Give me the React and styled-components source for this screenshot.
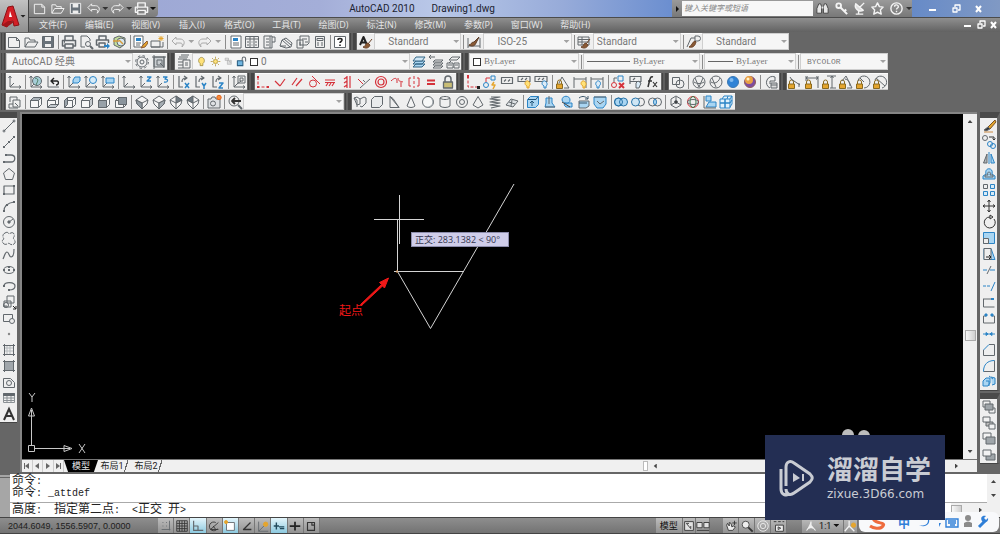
import React from 'react';
import styled, { createGlobalStyle } from 'styled-components';

const colors = {
  chrome: '#666666',
  bar: '#efefef',
  line: '#62686d',
  blue: '#2b84c6',
  paleBlue: '#a9d5f2',
  red: '#d5323b',
  gold: '#e5a52d',
};

const uiFont = 'Roboto, "Noto Sans CJK SC", sans-serif';
const serifFont = '"Liberation Serif", "Noto Sans CJK SC", serif';
const monoFont = '"Liberation Mono", "Noto Sans CJK SC", monospace';

const GlobalStyle = createGlobalStyle`
  * {
    box-sizing: border-box;
  }
  body {
    margin: 0;
    background: ${colors.chrome};
    font-family: ${uiFont};
    font-size: 10px;
  }
  button, select, input {
    margin: 0;
    padding: 0;
    border: 0;
    background: transparent;
    font: inherit;
    color: inherit;
  }
`;

const B = colors.blue;
const P = colors.paleBlue;
const R = colors.red;
const G = colors.gold;

const axes = <path d="M3 2v11h11M3 13l4-4M1.500 4L3 2l1.500 2M12 11.500l2 1.500-2 1.500" />;
const cube = <path d="M2.500 6.500l3-3h8v7l-3 3h-8zM2.500 6.500h8v7M10.500 6.500l3-3" fill="#f6f6f6" />;
const iso = <path d="M8 2l6 4-1 4-5 5-5-5-1-4zM2 6l6 3 6-3M8 9v6" fill="#f6f6f6" />;
const lock = (
  <g>
    <path d="M2.500 10V8a2 2 0 0 1 4 0v2" stroke="#8a6a20" />
    <rect x="1.500" y="10" width="6" height="4.500" fill={G} stroke="#8a6a20" />
  </g>
);
const bulb = <path d="M11 14v-2c-4-2-1-6 1-5s3 4 1 5v2z" fill="#ffe27a" stroke={G} />;
const brush = <path d="M14 5l-4 5M10 9c-3 0-2 4-5 4 3 2 6 1 7-2z" fill="#8a5a35" stroke="#6c4429" />;

const ICONS = {
  new: <path d="M2.500 3.500h8l3 3v7h-11zM10.500 3.500v3h3" />,
  open: <path d="M2 13V4h4l1 2h5v2M2 13l3-5h10l-3 5z" />,
  save: <g><path d="M2.500 2.500h11v11h-11z" fill="#69727a" /><path d="M5 3h6v4H5zM5 10h6v3H5z" fill="#eee" stroke="none" /></g>,
  print: <path d="M4 6V2h8v4M4 12H1.500V6.500h13V12H12M4 10h8v4H4zM3 8h1" strokeWidth="1.500" />,
  preview: <g><path d="M3 13V2h6l3 3v2M3 13h4" /><circle cx="10" cy="10" r="2.500" /><path d="M12 12l3 3" strokeWidth="2" /></g>,
  publish: <g><path d="M4 6V2h7v4M3 11H1.500V6h12v3M4 9h6v4H4z" strokeWidth="1.500" /><path d="M9 11h3V9l3 3-3 3v-2H9z" fill={B} stroke="none" /></g>,
  dwf: <g><path d="M3 4l5-2 6 2v6l-5 4-6-3z" fill="#c3dc9a" /><circle cx="10" cy="8" r="4" fill="#d7e8ee" /><path d="M8 6l4 4M2 7h6" stroke="#d79a3a" strokeWidth="1.500" /></g>,
  match: <g><path d="M2 2h9v11H2zM4 9h5M4 11h4" fill="#fff" /><path d="M4 4h5v3H4z" fill={B} stroke="none" /><path d="M15 7l-4 4-2 3 4-1 3-4z" fill={G} stroke="#8a5a35" /></g>,
  block: <g><path d="M2 13V7h9v6zM2 13h12V8" /><path d="M12 2v5M9.500 4.500h5M10 2.500l4 4M14 2.500l-4 4" stroke={G} /></g>,
  undo: <path d="M6 3L2 7l4 4V9h4c2 0 3 1 2 4 4-4 2-8-2-8H6z" />,
  redo: <path d="M10 3l4 4-4 4V9H6c-2 0-3 1-2 4-4-4-2-8 2-8h4z" />,
  props: <g><path d="M3 2h10v12H3zM5 9h6M5 11h6" fill="#fff" /><path d="M5 4h5v3H5z" fill={B} stroke="none" /></g>,
  dcenter: <path d="M1.500 2.500h13v11h-13zM6 3v10M10 3v10M2 5h12M3 8h2M7.500 8h1M11 8h2M3 11h2M7.500 11h1M11 11h2" />,
  palettes: <path d="M3 2h8v12H3zM11 3h3v5h-3M5 5h3M5 8h3M5 11h3M9 2v12" />,
  sheets: <path d="M2 12l2-6 4-2 6 5-1 4-5 1zM4 6l8 7M6 5l7 6M2 12h6" />,
  markup: <path d="M5 2h9v7l-2 2H5zM2 6h6v8H2zM7 5h5M4 9h2M4 11h2M10 8h3" />,
  calc: <path d="M3.500 2.500h9v11h-9zM5 4.500h6v2H5zM5 9h2M9 9h2M5 11h2M9 11h2" />,
  help: <g><rect x="2.500" y="2.500" width="11" height="11" fill="#fff" /><path d="M6 6c0-2 4-2 4 0 0 1.500-2 1.500-2 3M8 10.500v1.500" strokeWidth="1.600" stroke="#222" /></g>,
  textStyle: <g><path d="M2 11l3.500-8L9 11M3.500 8.500h4" stroke="#222" strokeWidth="2" />{brush}</g>,
  dimStyle: <g><path d="M2 4v10M14 4v10M2 12h12" /><path d="M13 3L8 8c-3 0-3 3-5 3 3 2 6 1 7-2z" fill="#8a5a35" stroke="#5c3d28" /></g>,
  tableStyle: <g><path d="M2 3h11v8H2zM2 5.500h11M6 3v8M2 8h11" />{brush}</g>,
  leader: <g><path d="M2 13l4-9h4M10 2h3a2 2 0 0 1 0 5h-3z" /><path d="M10 7c-3 1-3 5-6 6 4 1 6-1 7-5z" fill="#8a5a35" stroke="#6c4429" /></g>,
  gear: <g><circle cx="8" cy="8" r="5" /><circle cx="8" cy="8" r="2" /><circle cx="8" cy="8" r="6.400" strokeDasharray="2.500 2.500" /></g>,
  workspace: <g><path d="M3 3h10v10H3z" fill="#c9cdd0" /><path d="M1 3h14M3 1v14M13 2v12M6 6h5v5H6zM9 9l4 4" /></g>,
  layers: <g><path d="M5 1h8M3 3h9M2 5h9" /><path d="M2 8h5M2 11h5M2 14h5M7 6h7v8H7zM9 9h3M9 11h3" /></g>,
  layerMake: <g><path d="M2 13l3-3h9l-3 3zM2 10l3-3h9l-3 3z" fill={P} stroke="#356786" /><path d="M2 7l3-4h9l-3 4z" fill="#cfe6f5" stroke="#356786" /></g>,
  layerPrev: <path d="M5 14l2-2h8l-2 2zM5 11l2-2h8l-2 2zM5 8l2-2h8l-2 2zM7 3H1m2-2L1 3l2 2" />,
  layerState: <path d="M4 6l3-3h8l-3 3zM4 9l2-2M2 9h6v5H2zM9 9h5v5H9zM10 11h3M3 11h4" />,
  ucs: axes,
  ucsWorld: <g>{axes}<circle cx="9" cy="7" r="4.500" fill="#a5ccd6" /><path d="M7 4c5 1 2 4 1 7" stroke="#4a7d60" /></g>,
  ucsPrev: <g><path d="M3 2v11h11" /><path d="M7 7h5c2 0 2 4-1 4M9 4L6 7l3 3" stroke="#222" strokeWidth="1.400" /></g>,
  ucsFace: <g>{axes}<path d="M7 6l2-3h5v4l-2 2H7z" fill={P} stroke={B} /></g>,
  ucsObj: <g>{axes}<circle cx="10" cy="6" r="3.500" fill="#d6ebf8" stroke={B} /></g>,
  ucsView: <g>{axes}<path d="M6 4h8v5H6z" fill={P} stroke={B} /></g>,
  ucsZ: <g>{axes}<path d="M9 3h4l-4 4h4" stroke={B} strokeWidth="1.300" /></g>,
  ucs3: <g>{axes}<path d="M8 3h4L10 5c4 0 3 4-1 3" stroke={B} strokeWidth="1.300" /></g>,
  rotX: <g><path d="M3 2v11h4M6 8c0-3 1-4 4-4M8 2l3 2-3 2" strokeWidth="1.200" /><path d="M9 9l4 5M13 9l-4 5" stroke={B} strokeWidth="1.500" /></g>,
  rotY: <g><path d="M3 2v11h4M6 8c0-3 1-4 4-4M8 2l3 2-3 2" strokeWidth="1.200" /><path d="M9 9l2 3 2-3M11 12v3" stroke={B} strokeWidth="1.500" /></g>,
  rotZ: <g><path d="M3 2v11h4M6 8c0-3 1-4 4-4M8 2l3 2-3 2" strokeWidth="1.200" /><path d="M9 9h4l-4 5h4" stroke={B} strokeWidth="1.500" /></g>,
  ucsApply: <g>{axes}<path d="M7 2h7v7H7zM9 4h3v3H9zM6 10l4-3" /></g>,
  coincident: <g><path d="M3 3v10h10" stroke={R} strokeDasharray="3 1.500" /><path d="M2 2h2v2H2zM2 12h2v2H2zM12 12h2v2h-2z" fill={R} stroke="none" /></g>,
  perp: <path d="M3 7l5 5M8 12l5-7" stroke={R} strokeWidth="1.200" />,
  parallel: <path d="M3 11l5-7M7 12l6-7" stroke={R} strokeWidth="1.200" />,
  tangent: <g stroke={R}><circle cx="7" cy="9.500" r="3.500" /><path d="M6 2l8 8" /></g>,
  horiz: <path d="M3 6h10M3 8.500h10M4 12l2-3M7 12l2-3M10 12l2-3" stroke={R} strokeWidth="1.200" />,
  vert: <path d="M8 2v12M11 2v12M5 5l3-2M5 9l3-2M5 13l3-2" stroke={R} strokeWidth="1.200" />,
  collinear: <g><path d="M2 5l5 5" stroke={R} /><path d="M4 14l10-9M7 6l2 2" /></g>,
  concentric: <g stroke={R} strokeWidth="1.200"><circle cx="8" cy="8" r="5.500" /><circle cx="8" cy="8" r="3" /></g>,
  smooth: <path d="M2 7c4-4 6-3 6 0M9 4c0 4 3 3 5 4M8 7v2M12 8v5" stroke={R} />,
  symmetric: <path d="M5 4H3v8h2M11 4h2v8h-2M8 2v3M8 7v3M8 12v2" stroke={R} />,
  equal: <path d="M4 6.500h8M4 10h8" stroke={R} strokeWidth="1.800" />,
  fix: <g><path d="M5 8V5a3 3 0 0 1 6 0v3" strokeWidth="1.500" /><path d="M3.500 8h9v6h-9z" fill="#c9bd75" strokeWidth="1.300" /></g>,
  autoCon: <g><path d="M3 2v11h10" stroke={R} strokeDasharray="3 1.500" /><path d="M2 1h2v3H2z" fill={R} stroke="none" /><path d="M12 12h3v3h-3z" fill="#222" stroke="none" /></g>,
  autoAll: <g stroke={B}><path d="M9 2h4v4H9z" /><circle cx="4" cy="11" r="2.500" /><path d="M4 8V4h4" stroke={R} /><path d="M12 8l-2 3h3l-2 4" stroke={G} strokeWidth="1.500" /></g>,
  conShow: <path d="M2.500 3.500h11v6h-11zM5 7.500l2-2M9 7.500l2-2" strokeWidth="1.200" />,
  conShowAll: <g><path d="M2 2.500h12v5H2zM5 6l2-2M9 6l2-2" strokeWidth="1.200" />{bulb}</g>,
  conHideAll: <g><path d="M2 2.500h12v5H2zM5 6l2-2M9 6l2-2" strokeWidth="1.200" /><path d="M11 14v-2c-4-2-1-6 1-5s3 4 1 5v2z" fill="#dcecf8" stroke={B} /></g>,
  dimAuto: <g><path d="M4 9l3-6 7 11M9 14h5" />{lock}</g>,
  dimShow: <g><path d="M2 3v11M14 3v11M2 5h12" />{bulb}</g>,
  dimHide: <g><path d="M2 3v11M14 3v11M2 5h12" /><path d="M8 14v-2c-3-2 0-6 2-5s2 4 0 5v2z" fill="#dcecf8" stroke={B} /></g>,
  conDel: <g><path d="M8 2h5v5H8z" stroke={B} /><circle cx="4" cy="11" r="2.500" stroke={R} /><path d="M4 8V4h3" /><path d="M9 9l5 5M14 9l-5 5" stroke={R} strokeWidth="2" /></g>,
  conSet: <g><path d="M3 2.500h11v5H3zM6 6l2-2M3 7v3" strokeWidth="1.200" /><path d="M9 14V9l2-2 3 2-2 5z" fill="#dcecf8" /></g>,
  fx: <g><path d="M9 3c-3-1-3 2-5 10M4 7h4" strokeWidth="1.500" stroke="#333" /><path d="M9 8l4 5M13 8l-4 5" strokeWidth="1.200" stroke="#333" /></g>,
  wire2d: <g><path d="M2.500 3.500h7v7h-7z" /><circle cx="10" cy="10" r="4" /></g>,
  wire3d: <g><circle cx="8" cy="8" r="6" /><path d="M4 4l4 9 4-9M3 8c3 2 7 2 10 0" /></g>,
  hidden3d: <g><circle cx="8" cy="8" r="6" /><path d="M4 4l4 9M3 8c3 2 7 1 9-4" /></g>,
  realistic: <g><circle cx="8" cy="8" r="5.500" fill="#2f83d6" stroke="#3a78b3" /><circle cx="6.500" cy="6" r="2" fill="#7fb9ee" stroke="none" /></g>,
  conceptual: <g><circle cx="8" cy="8" r="5.500" fill="#7d4ba0" stroke="#8f5a5b" /><circle cx="7" cy="6" r="4" fill="#e9a043" stroke="none" /><circle cx="6" cy="5" r="1.500" fill="#fff2cc" stroke="none" /></g>,
  styleMgr: <g><path d="M12 3a6 6 0 1 0-5 11M12 3v4H7v3" /><path d="M8 9h6v5H8zM8 11h6" fill="#ddd" /></g>,
  dimLin: <g>{lock}<path d="M4 5l9 6M3 3l2 3M12 9v4" /></g>,
  dimHor: <g>{lock}<path d="M2 2v5M14 2v12M2 4h12M4 2.500L2 4l2 1.500M12 2.500l2 1.500-2 1.500" /></g>,
  dimVer: <g>{lock}<path d="M6 2h9M9 14h6M11 2v12M9.500 4L11 2l1.500 2" /></g>,
  dimAng: <g>{lock}<path d="M4 7l4-5 6 12H9M7 5c4 1 5 4 5 7" /></g>,
  dimRad: <g>{lock}<path d="M3 7a6 6 0 1 1 6 7M9 8l-4-4" /></g>,
  dimDia: <g>{lock}<path d="M3 6a6 6 0 1 1 7 8M4 4l9 8" /></g>,
  views: <path d="M3 8V3h7v3M6 6h7v7H6zM2 10h4M2 10v4h9M8 9l3 3" />,
  vTop: <g>{cube}<path d="M2.500 6.500l3-3h8l-3 3z" fill="#aab2b8" /></g>,
  vBottom: <g>{cube}<path d="M2.500 13.500l3-3h8l-3 3z" fill="#c4cacf" /></g>,
  vLeft: <g>{cube}<path d="M2.500 6.500l3-3v7l-3 3z" fill="#9aa3aa" /></g>,
  vRight: <g>{cube}<path d="M10.500 6.500l3-3v7l-3 3z" fill="#c6cbcf" /></g>,
  vFront: <g>{cube}<path d="M2.500 6.500h8v7h-8z" fill="#98a1a8" /></g>,
  vBack: <g>{cube}<path d="M5.500 3.500h8v7h-8z" fill="#8a949c" /></g>,
  isoSW: <g>{iso}<path d="M2 6l6 3v6l-5-5z" fill="#8f989f" /></g>,
  isoSE: <g>{iso}<path d="M14 6L8 9v6l5-5z" fill="#a4acb2" /></g>,
  isoNE: <g>{iso}<path d="M8 2l6 4-6 3z" fill="#6f7a82" /></g>,
  isoNW: <g>{iso}<path d="M8 2L2 6l6 3z" fill="#6f7a82" /></g>,
  camera: <g><path d="M2 5h3l1-2h3l1 2h4v9H2z" fill="#dfe2e4" /><circle cx="7" cy="9.500" r="2.500" /><circle cx="13" cy="3.500" r="2.200" fill="#f58b3c" stroke="#e2641b" /></g>,
  vPrev: <g><circle cx="7" cy="7" r="5" /><path d="M11 11l4 4" strokeWidth="2" /><path d="M14 7H5m3-3L5 7l3 3" strokeWidth="1.800" stroke="#333" /></g>,
  polysolid: <path d="M2 4l3-1 3 2v5l-3 1zM2 4l3 2v7M8 5l4-2 2 1v5l-4 4-2-1" />,
  box: <path d="M2.500 5.500l3-3h8v8l-3 3h-8z" fill="#e9ebec" />,
  wedge: <path d="M4 2.500v11h9zM4 2.500l3 2 6 9" />,
  cone: <path d="M8 2.500L4 12c2 2 6 2 8 0z" fill="#f4f4f4" />,
  sphere: <g><circle cx="8" cy="8" r="5.500" fill="#f7f8f8" /><path d="M12 5c3 6-3 9-6 8" stroke="#a0a7ac" /></g>,
  cylinder: <path d="M3 4v8c2 2 8 2 10 0V4c-2-2-8-2-10 0c2 2 8 2 10 0" fill="#f0f0f0" />,
  torus: <g><circle cx="8" cy="8" r="5.500" /><circle cx="8" cy="8" r="2.500" /></g>,
  pyramid: <path d="M8 2.500L3 11l5 3 5-3z" />,
  helix: <path d="M4 3h9L3 5l10 1L3 8l10 1L3 11l10 1-9 2" strokeWidth="1.200" />,
  planar: <path d="M2 11l5-6 7 2-5 6zM5 8l6 2M8 6l-1 6" fill="#dde1e4" />,
  extrude: <g><path d="M2.500 5.500l3-3h8v8l-3 3h-8z" fill={P} stroke={B} /><path d="M7 12V7M5 9l2-2 2 2M3 5.500h8l2-3" stroke="#24567a" /></g>,
  presspull: <g><path d="M4 9V4h6v5l3 4H3l1-4z" fill={P} stroke={B} /><path d="M7 10V2M3 13h10" /></g>,
  sweep: <g stroke={B}><path d="M3 6c0-5 8-5 8 0s-7 4-8 0zM6 9h7v4H7c-2-1-2-4-1-4z" fill={P} /><path d="M3 8l8 5" stroke="#444" /></g>,
  revolve: <g><path d="M3 7h10v5l-3 2H3z" fill={P} /><path d="M3 4c4-3 7-1 9 1M12 2v3H9M3 9h8" stroke="#3a5569" /></g>,
  loft: <g><path d="M2 3h12v7l-3 4H5l-3-4z" fill={P} stroke={B} /><path d="M2 3h12M5 7l3 3 4-3" /></g>,
  union: <g stroke="#2773a8"><circle cx="5.500" cy="8" r="4" fill={P} /><circle cx="10.500" cy="8" r="4" fill={P} /><circle cx="5.500" cy="8" r="4" /></g>,
  subtract: <g><circle cx="10.500" cy="8" r="4" /><circle cx="5.500" cy="8" r="4" fill="#cfe6f5" stroke="#2773a8" /></g>,
  intersect: <g><circle cx="5.500" cy="8" r="4" /><circle cx="10.500" cy="8" r="4" /><path d="M8 5c2 2 2 4 0 6-2-2-2-4 0-6z" fill={P} stroke={B} /></g>,
  move3d: <g><path d="M8 2l5 3v6l-5 3-5-3V5zM8 8V3M8 8l5 3M8 8l-5 3" /><circle cx="8" cy="8" r="1.500" fill="#333" /></g>,
  rotate3d: <g><circle cx="8" cy="8" r="5.500" stroke={R} /><ellipse cx="8" cy="8" rx="3" ry="5.500" stroke="#397a4b" /><ellipse cx="8" cy="8" rx="5.500" ry="2.500" /></g>,
  align3d: <g><path d="M4 2h5v5H4zM7 8h7v5H4z" fill={P} stroke={B} /><path d="M2 2v12h12" /></g>,
  array3d: <g stroke={B}><path d="M2 5h5v4H2zM7 5h5v4H7zM2 9h5v5H2zM7 9h5v5H7zM4 5l2-3h8v8l-2 3M9 5l1-3M12 5l2-3M12 9l2-3" fill="#e2f2fc" /></g>,
  line: <g><path d="M3 13L13 3" /><circle cx="3" cy="13" r="1" /><circle cx="13" cy="3" r="1" /></g>,
  xline: <g><path d="M3 13L13 3" /><path d="M2 12h2v2H2zM12 2h2v2h-2zM7 7h2v2H7z" fill={colors.line} stroke="none" /></g>,
  pline: <g><path d="M3 12h7c5 0 5-7 0-7H5" strokeWidth="1.300" /><path d="M2 11h2v2H2zM4 4h2v2H4z" fill={colors.line} stroke="none" /></g>,
  polygon: <path d="M8 2.500l5.500 4.500-2 6.500h-7L2.500 7z" />,
  rect: <g><path d="M3 4h10v8H3z" strokeWidth="1.200" /><path d="M12 3h2v2h-2zM2 11h2v2H2z" fill={colors.line} stroke="none" /></g>,
  arc: <g><path d="M3 13c0-6 4-8 10-9" strokeWidth="1.200" /><path d="M2 12h2v2H2zM12 3h2v2h-2zM5 6h2v2H5z" fill={colors.line} stroke="none" /></g>,
  circle: <g><circle cx="8" cy="8" r="5.500" /><path d="M8 8l4-3" /><circle cx="8" cy="8" r="1.200" fill={colors.line} /></g>,
  cloud: <path d="M4 3c3-2 4 1 4 1s4-3 5 0-1 4-1 4 4 4 1 6-5-1-5-1-4 3-6 0 1-4 1-4-3-4 1-6z" strokeDasharray="5 1" />,
  spline: <path d="M2 13c2-4 2-7 4-7s2 5 4 5 3-4 3-8" strokeWidth="1.200" />,
  ellipse: <g><ellipse cx="8" cy="8" rx="5.500" ry="3.500" /><path d="M7 7h2v2H7zM2 7h2v2H2zM12 7h2v2h-2zM7 4h2v2H7z" fill={colors.line} stroke="none" /></g>,
  ellArc: <g><path d="M3 8c0-5 11-4 11 0 0 3-3 4-6 4" strokeWidth="1.200" /><path d="M2 7h2v2H2zM7 11h2v2H7z" fill={colors.line} stroke="none" /></g>,
  insert: <g><path d="M6 2h7v7H6zM3 7h7v6H3zM2 12h4" /><circle cx="5" cy="11" r="2.500" /><path d="M12 12l3 3M15 12v3h-3" stroke="#222" /></g>,
  makeBlock: <g><path d="M2.500 4.500h9v7h-9z" /><circle cx="11" cy="11" r="2.500" fill="#eee" /></g>,
  point: <circle cx="8" cy="8" r="1.200" fill="#888" stroke="none" />,
  hatch: <g><path d="M3.500 3.500h9v9h-9zM2 3.500h12M2 12.500h12M3.500 2v12M12.500 2v12" /><path d="M4 6h8M4 9h8M6 4v8M9 4v8" stroke="#b5babd" /></g>,
  gradient: <g><path d="M3.500 3.500h9v9h-9z" fill="#a0a6ab" /><path d="M2 3.500h12M2 12.500h12M3.500 2v12M12.500 2v12" /></g>,
  region: <g><path d="M2.500 4.500h7l4 4v5h-11z" /><circle cx="8" cy="9" r="2.500" /></g>,
  table: <g><path d="M2.500 3.500h11v9h-11zM2.500 8h11M2.500 10.500h11M6 5v8M10 5v8" stroke="#8b9195" /><path d="M2.500 3.500h11v2h-11z" fill={colors.line} /></g>,
  mtext: <path d="M3 14L8 3 13 14M5 10h6" strokeWidth="2" stroke="#333" strokeLinejoin="miter" />,
  erase: <g><path d="M14 2L7 9l2 2 6-7z" fill={G} stroke="#775326" /><path d="M7 9l-4 3 2 1 4-2z" fill="#333" /><path d="M3 14h9" stroke="#ca8a45" /></g>,
  copy: <g stroke={B}><circle cx="4" cy="4" r="2.500" stroke={colors.line} /><circle cx="9" cy="10" r="2.500" /><circle cx="12" cy="12" r="2.500" /><path d="M8 3h5v3M11.500 4.500L13 6l1.500-1.500" stroke="#333" /></g>,
  mirror: <g><path d="M6 4v9H2.500z" fill="#aeb4b8" /><path d="M10 4v9h3.500z" fill={P} stroke={B} /><path d="M8 2v12" stroke={B} /></g>,
  offset: <g><path d="M2 13v-3l3-2c-2-7 8-7 6 0l3 2v3z" fill={P} stroke={B} /><path d="M4 11h8V9H9c2-4-4-4-2 0H4z" /></g>,
  array: <g><path d="M2.500 2.500h4v4h-4z" /><path d="M9.500 2.500h4v4h-4zM2.500 9.500h4v4h-4zM9.500 9.500h4v4h-4z" fill="#d6ebf8" stroke={B} /></g>,
  move: <path d="M8 2v12M2 8h12M6.500 4L8 2l1.500 2M6.500 12L8 14l1.500-2M4 6.500L2 8l2 1.500M12 6.500L14 8l-2 1.500" stroke="#333" />,
  rotate: <path d="M9 3a5.500 5.500 0 1 0 4 2M9 1v4l3-2z" stroke="#333" />,
  scale: <g><path d="M2.500 2.500h11v11h-11z" fill={P} stroke={B} /><path d="M2.500 8.500h5v5h-5z" fill="#eee" /></g>,
  stretch: <g><path d="M3 2.500h7l4 11H3z" fill={P} stroke={B} /><path d="M3 2.500h7v11H3z" fill="#eee" /><path d="M5 11h5M8 9l2 2-2 2" stroke="#222" /></g>,
  trim: <g><path d="M2 8h4M9 8h5" stroke={B} /><path d="M6 12l4-8" /></g>,
  extend: <g><path d="M2 8h8" stroke={B} strokeDasharray="3 1" /><path d="M10 13l4-9" stroke={B} /></g>,
  breakAt: <g><path d="M2.500 5v8h11M2 5h9" /><path d="M10 4h3v2h-3z" fill={B} stroke="none" /></g>,
  break: <g><path d="M5 6H2.500v7h11V6H11" /><path d="M4 4h2v2H4zM10 4h2v2h-2z" fill={B} stroke={B} /></g>,
  join: <path d="M2 8h12M5 6.500L7 8 5 9.500zM11 6.500L9 8l2 1.500z" stroke={B} fill={B} />,
  chamfer: <g><path d="M2.500 8v5.500h11v-11H8" /><path d="M2.500 8L8 2.500" stroke={B} /></g>,
  fillet: <g><path d="M2.500 13.500h11v-11" /><path d="M2.500 13.500c0-7 4-11 11-11" stroke={B} /></g>,
  explode: <g stroke={B}><path d="M2 7l3-3h4v5l-2 3H2zM10 3l4 1v6l-3 1M5 7h3v5M8 2l4 3" fill={P} /></g>,
  front: <g><path d="M2 2h7v6H2zM8 9h6v5H8z" /><path d="M4 5h8v6H4z" fill="#9fa5a9" /></g>,
  back: <g><path d="M5 7h7v4H5z" fill="#bbb" /><path d="M2 2h7v5H2zM8 9h6v5H8z" fill="#f2f2f2" /></g>,
  above: <g><path d="M2 2h8v6H2z" fill="#f2f2f2" /><path d="M5 6h9v7H5z" fill="#9fa5a9" /></g>,
  under: <g><path d="M5 7h9v6H5z" fill="#9fa5a9" /><path d="M2 3h8v6H2z" fill="#f2f2f2" /></g>,
  sun: <g stroke="#a8861d"><circle cx="8" cy="8" r="3" fill="#ffe27a" /><path d="M8 1v3M8 12v3M1 8h3M12 8h3M3 3l2 2M11 11l2 2M13 3l-2 2M5 11l-2 2" /></g>,
  bulb: <path d="M6 14v-3C2 8 4 2 8 2s6 6 2 9v3z" fill="#ffe27a" stroke="#8c7a31" />,
  freeze: <path d="M2 2h6v4H2zM6 6h7v7H6zM9 8h2v3" stroke="#aaa" fill="#ddd" />,
  unlock: <g><path d="M2 7h8v7H2z" fill="#71b5df" stroke="#2b5f82" strokeWidth="1.500" /><path d="M9 7V4a2.500 2.500 0 0 1 5 0v4" strokeWidth="1.500" /></g>,
  find: <g><path d="M2 13V8l2-5h2l1 3v7zM9 13V6l1-3h2l2 5v5z" fill="#e8e8e8" stroke="#444" /><path d="M7 7h2" stroke="#e8e8e8" strokeWidth="2" /></g>,
  key: <g><circle cx="5" cy="5" r="2.500" strokeWidth="2" /><path d="M7 7l7 7M11 11l2-2" strokeWidth="2.200" /></g>,
  dish: <path d="M4 3c-2 6 4 9 8 7zM8 7l5-5M4 14h8M7 11v3" strokeWidth="1.500" fill="#ddd" />,
  star: <path d="M8 2l2 4 4 .500-3 3 1 4.500-4-2-4 2 1-4.500-3-3L6 6z" strokeWidth="1.500" />,
  info: <g><circle cx="8" cy="8" r="6" strokeWidth="1.500" /><path d="M6 6c0-3 4-2 4 0 0 1.500-2 1.500-2 3M8 10.500v1.500" strokeWidth="1.500" /></g>,
  snap: <path d="M4 4h1M8 4h1M4 8h1M8 8h1M12 2v11M3 12h10" />,
  grid: <path d="M2 2h12v12H2zM2 5h12M2 8h12M2 11h12M5 2v12M8 2v12M11 2v12" stroke="#333" />,
  ortho: <path d="M3 2v11h11M3 8h5v5" strokeWidth="1.300" />,
  polar: <path d="M13 4L4 12h9M10 4a5 5 0 1 0 2 7M7 8l3 4" stroke="#333" />,
  osnap: <g><path d="M4 4h9v9H4z" fill="#fff" /><circle cx="3.500" cy="3.500" r="1.800" fill={G} stroke={G} /></g>,
  otrack: <path d="M12 4L4 12h9" stroke="#333" strokeWidth="1.500" />,
  ducs: <g><path d="M3 3v11h11M3 14l6-6" /><circle cx="11" cy="6" r="2.500" fill={G} stroke={G} /></g>,
  dyn: <path d="M2 8h6M5 4v8M8 9h6M9 11h5" strokeWidth="1.600" stroke="#224a5c" />,
  lwt: <path d="M2 8h12M8 3v10" strokeWidth="2" stroke="#222" />,
  qp: <path d="M4 4h8v9H4zM9 4v3h3" stroke="#333" strokeWidth="1.300" />,
  layoutA: <path d="M3 3h10v10H3zM5 5l5 6M5 5h3M10 8v3" fill="#e2e2e2" stroke="#333" />,
  layoutB: <path d="M1 4h6v6H1zM9 4h6v6H9zM1 13h14" fill="#e2e2e2" stroke="#333" />,
  pan: <path d="M3 7l2 6h5l3-4-2-1-2 1-1-4-2-1v4L4 5zM12 2v5M9.500 4.500h5" fill="#eee" stroke="#333" />,
  zoomLens: <g><circle cx="6.500" cy="6.500" r="4" fill="#eee" stroke="#444" /><path d="M9.500 9.500l5 5" strokeWidth="2.200" stroke="#333" /></g>,
  wheel: <g stroke="#eee"><circle cx="8" cy="8" r="6" /><circle cx="8" cy="8" r="3" /></g>,
  motion: <path d="M4 7h9v7H4zM2 3h3M7 3h3M12 3h2M7 9l3 1.500L7 12z" fill="#eee" stroke="#333" />,
  annot: <path d="M8 2v5l-6 7M8 7l6 7M5 11l3-2 3 2" fill="#eee" stroke="#f2f2f2" strokeWidth="1.500" />,
  annotVis: <g><path d="M7 2v6l-5 6M7 8l6 6" stroke="#f2f2f2" strokeWidth="1.500" /><circle cx="12" cy="7" r="2.500" fill={G} stroke={G} /></g>,
};

const Svg = styled.svg`
  display: block;
  flex: none;
  fill: none;
  stroke: ${(p) => p.$color || colors.line};
  stroke-width: 1;
  stroke-linejoin: round;
`;

function Icon({ name, size = 16, color }) {
  return (
    <Svg width={size} height={size} viewBox="0 0 16 16" $color={color} aria-hidden="true">
      {ICONS[name]}
    </Svg>
  );
}

const Page = styled.div`
  position: relative;
  display: flex;
  flex-direction: column;
  min-height: 100vh;
  overflow: hidden;
  background: ${colors.chrome};
`;

const Header = styled.header`
  display: grid;
  grid-template-columns: 29px 1fr;
  grid-template-rows: 17px 15px;
`;

const AppButton = styled.button`
  grid-row: 1 / span 2;
  display: flex;
  align-items: center;
  background: linear-gradient(#c2c2c2, #8f8f8f);
  border-right: 1px solid #444;
`;

const TitleBar = styled.div`
  display: flex;
  align-items: stretch;
  background: radial-gradient(ellipse at 158px 14px, #f0e4a4 0 8px, transparent 18px),
    radial-gradient(ellipse at 217px 15px, #5fa3b4 0 10px, transparent 20px),
    linear-gradient(90deg, #9aa5d3 0, #a4aed8 30%, #b9c8e8 42%, #97abd9 55%, #6c8fd0 66%, #6489c8 90%, #8099c4 100%);
`;

const QuickAccess = styled.div`
  display: flex;
  align-items: center;
  justify-content: space-around;
  width: 129px;
  padding: 0 2px;
  background: linear-gradient(#9a9a9a, #7c7c7c);
  border-radius: 0 0 4px 0;
`;

const Title = styled.h1`
  flex: 1;
  display: flex;
  justify-content: center;
  gap: 17px;
  margin: 0;
  padding-left: 14px;
  font-size: 10px;
  font-weight: 400;
  line-height: 17px;
  color: #1c2230;
  white-space: nowrap;
`;

const InfoCenter = styled.form`
  display: flex;
  align-items: center;
  width: 240px;
  background: linear-gradient(#9a9a9a, #787878);
  gap: 1px;
`;

const SearchToggle = styled.button`
  width: 9px;
  height: 15px;
  border-left: 4px solid transparent;
  &::before {
    content: '';
    display: block;
    width: 0;
    border-left: 3px solid #111;
    border-top: 3px solid transparent;
    border-bottom: 3px solid transparent;
  }
`;

const SearchBox = styled.input`
  width: 131px;
  height: 15px;
  padding: 0 2px;
  background: #f7f7f7;
  font-size: 8px;
  font-style: italic;
  &::placeholder {
    color: #888;
    opacity: 1;
  }
`;

const WindowButtons = styled.div`
  display: flex;
  align-items: center;
  justify-content: space-around;
  width: ${(p) => p.$width}px;
  padding: 0 ${(p) => p.$inset || 0}px;
  margin-left: ${(p) => p.$push || 0};
`;

const WindowButton = styled.button`
  display: grid;
  place-items: center;
  width: 13px;
  height: 14px;
`;

const MenuBar = styled.nav`
  display: flex;
  align-items: center;
  padding-left: 1px;
  background: linear-gradient(#8f8f8f, #626262);
  border-top: 1px solid #4b4b4b;
`;

const MenuButton = styled.button`
  min-width: 46px;
  padding: 0 9px;
  font-family: "Open Sans", "Noto Sans CJK SC", sans-serif;
  font-size: 9px;
  line-height: 14px;
  color: #e4e4e4;
  white-space: nowrap;
`;

const Toolbars = styled.div`
  display: grid;
  gap: 3px;
  padding: 1px 0 2px;
`;

const ToolbarRow = styled.div`
  display: flex;
  height: 17px;
`;

const Grip = styled.div`
  flex: none;
  width: ${(p) => p.$width || 8}px;
  background: linear-gradient(90deg, #454545 0 2px, #5e5e5e 2px 4px, #454545 4px);
  background-clip: content-box;
  padding: 0 1px;
`;

const Strip = styled.div`
  display: flex;
  align-items: center;
  flex: none;
  width: ${(p) => p.$width}px;
  background: ${colors.bar};
  border-top: 1px solid #fbfbfb;
  border-bottom: 1px solid #c9c9c9;
`;

const ToolButton = styled.button`
  flex: 1 1 0;
  min-width: 0;
  display: flex;
  justify-content: center;
  align-items: center;
`;

const Divider = styled.span`
  flex: none;
  width: 4px;
  height: 14px;
  background: linear-gradient(90deg, transparent 0 2px, #8c8c8c 2px 3px, transparent 3px);
`;

const Caret = styled.span`
  flex: none;
  width: 6px;
  height: 3px;
  background: ${(p) => p.$color || '#a2a2a2'};
  clip-path: polygon(0 0, 100% 0, 50% 100%);
`;

const CaretButton = styled.button`
  flex: none;
  display: grid;
  place-items: center;
  width: 10px;
`;

const FIELD_FONTS = {
  ui: `10px ${uiFont}`,
  serif: `9px ${serifFont}`,
  mono: `8px ${monoFont}`,
};

const Field = styled.label`
  flex: none;
  display: flex;
  align-items: center;
  gap: 3px;
  width: ${(p) => p.$width}px;
  height: 17px;
  padding: 0 1px 0 ${(p) => p.$indent || 3}px;
  background: #f6f6f6;
  border: 1px solid #cfcfcf;
  color: #777;
  font: ${(p) => FIELD_FONTS[p.$font || 'ui']};
`;

const Select = styled.select`
  flex: 1;
  min-width: 0;
  height: 15px;
  appearance: none;
  line-height: 15px;
`;

const Swatch = styled.span`
  flex: none;
  width: 8px;
  height: 8px;
  border: 1px solid #333;
  background: #fff;
`;

const LineSample = styled.span`
  flex: none;
  width: ${(p) => p.$length}px;
  height: 1px;
  background: #666;
`;

const Workspace = styled.main`
  flex: 1;
  display: grid;
  grid-template-columns: 17px 1fr 20px;
  gap: 3px;
  align-items: stretch;
`;

const SideColumn = styled.div`
  display: flex;
  flex-direction: column;
  gap: 2px;
`;

const SideStrip = styled.div`
  display: flex;
  flex-direction: column;
  background: ${colors.bar};
  border-top: 6px solid #4a4a4a;
  border-right: ${(p) => p.$edge || 0}px solid ${colors.chrome};
  border-bottom: 1px solid #444;
`;

const SideButton = styled.button`
  display: grid;
  place-items: center;
  height: 16px;
`;

const DrawingWindow = styled.section`
  display: grid;
  grid-template-columns: 1fr 14px;
  grid-template-rows: 1fr 13px;
  border: 2px solid #858585;
  border-width: 2px 0 0 2px;
`;

const Canvas = styled.div`
  position: relative;
  overflow: hidden;
  background: #000;
`;

const Geometry = styled.svg`
  position: absolute;
  left: 0;
  top: 0;
  fill: none;
  stroke: #d4d4d4;
`;

const UcsMark = styled.svg`
  position: absolute;
  left: 0;
  bottom: 0;
  fill: none;
  stroke: #c8c8c8;
`;

const DynamicTip = styled.output`
  position: absolute;
  left: 389px;
  top: 118px;
  width: 98px;
  height: 15px;
  padding-left: 3px;
  border: 1px solid #8d8dac;
  background: #cfcde9;
  color: #35354f;
  font-family: "Open Sans", "Noto Sans CJK SC", sans-serif;
  font-size: 9px;
  line-height: 13px;
  white-space: nowrap;
`;

const Note = styled.span`
  position: absolute;
  left: 317px;
  top: 190px;
  color: #f01818;
  font-size: 12px;
  line-height: 14px;
`;

const VScroll = styled.div`
  display: flex;
  flex-direction: column;
  align-items: center;
  justify-content: space-between;
  padding: 5px 0 5px;
  background: #f0f0f0;
`;

const Thumb = styled.span`
  width: 11px;
  height: 11px;
  margin-top: ${(p) => p.$drop || 0}px;
  border: 1px solid #aaa;
  background: linear-gradient(90deg, #f8f8f8, #cfcfcf);
`;

const Triangle = styled.button`
  width: 5px;
  height: 5px;
  background: #444;
  clip-path: ${(p) =>
    ({
      up: 'polygon(0 80%, 50% 20%, 100% 80%)',
      down: 'polygon(0 20%, 50% 80%, 100% 20%)',
      left: 'polygon(80% 0, 20% 50%, 80% 100%)',
      right: 'polygon(20% 0, 80% 50%, 20% 100%)',
    })[p.$dir]};
`;

const TabRow = styled.div`
  grid-column: 1 / -1;
  display: flex;
  align-items: stretch;
  background: #f0f0f0;
  border-top: 1px solid #777;
`;

const TabNav = styled.div`
  display: flex;
  width: 42px;
`;

const TabNavButton = styled.button`
  flex: 1;
  display: grid;
  place-items: center;
  border-right: 1px solid #ccc;
`;

const Tab = styled.button`
  width: 34px;
  margin-right: ${(p) => (p.$active ? -3 : 0)}px;
  background: ${(p) =>
    p.$active ? '#000' : 'linear-gradient(108deg, transparent 31px, #666 31px, #666 32px, transparent 32px)'};
  clip-path: ${(p) => (p.$active ? 'polygon(0 0, 100% 0, 88% 100%, 12% 100%)' : 'none')};
  color: ${(p) => (p.$active ? '#e8e8e8' : '#222')};
  font-size: 9px;
  line-height: 12px;
  white-space: nowrap;
`;

const HScroll = styled.div`
  display: flex;
  align-items: center;
  justify-content: space-between;
  width: 35%;
  margin-left: auto;
  padding: 0 18px 0 0;
`;

const HStart = styled.div`
  display: flex;
  align-items: center;
  gap: 5px;
`;

const Splitter = styled.span`
  width: 5px;
  height: 10px;
  border: 1px solid #bbb;
  background: #fff;
`;

const CommandPanel = styled.section`
  display: grid;
  grid-template-columns: 10px 1fr 13px;
  grid-template-rows: 29px 14px;
  margin-top: 2px;
  background: #fff;
  color: #222;
  font-family: ${monoFont};
  font-size: 10px;
`;

const CommandGrip = styled.div`
  grid-row: 1 / span 2;
  background: #a6a6a6;
  border-top: 4px double #666;
`;

const History = styled.div`
  padding: 1px 0 0 2px;
  line-height: 12px;
  border-bottom: 1px solid #aaa;
`;

const HistoryLine = styled.div`
  height: 12px;
  white-space: pre;
`;

const Prompt = styled.label`
  grid-column: 2 / -1;
  display: flex;
  align-items: center;
  padding-left: 2px;
  line-height: 12px;
  white-space: pre;
`;

const Han = styled.span`
  font-size: 12px;
`;

const CommandInput = styled.input`
  flex: 1;
  height: 12px;
  outline: none;
`;

const PromptScroll = styled.span`
  display: flex;
  align-items: center;
  gap: 16px;
  align-self: stretch;
  padding-right: 17px;
  background: #f0f0f0;
`;

const StatusBar = styled.footer`
  display: flex;
  align-items: center;
  height: 17px;
  background: linear-gradient(#8e8e8e, #737373);
  border-top: 1px solid #444;
  border-bottom: 1px solid #444;
`;

const Coordinates = styled.output`
  width: 158px;
  padding-left: 8px;
  color: #202020;
  font-family: "Liberation Sans", sans-serif;
  font-size: 9px;
`;

const StatusGroup = styled.div`
  display: flex;
  width: ${(p) => p.$width}px;
  margin-left: ${(p) => p.$push || 0};
  margin-right: ${(p) => p.$after || 0}px;
`;

const StatusButton = styled.button`
  flex: ${(p) => p.$grow || 1} 1 0;
  min-width: 0;
  height: 15px;
  display: flex;
  align-items: center;
  justify-content: center;
  gap: 2px;
  border-right: 1px solid #777;
  background: ${(p) => (p.$on ? 'linear-gradient(#e4f5fb, #8cc9df)' : 'linear-gradient(#bdbdbd, #929292)')};
  color: #111;
  font-size: 9px;
  white-space: nowrap;
`;

const ImeBar = styled.aside`
  position: absolute;
  right: 1px;
  bottom: 2px;
  display: flex;
  align-items: center;
  gap: 8px;
  width: 140px;
  height: 20px;
  padding-left: 9px;
  border-radius: 6px;
  background: #f8f9fb;
  color: #2f7fd8;
  font-size: 12px;
  font-weight: 700;
`;

const Watermark = styled.aside`
  position: absolute;
  right: 55px;
  bottom: 14px;
  display: flex;
  align-items: center;
  gap: 12px;
  width: 180px;
  height: 85px;
  padding-left: 14px;
  background: #232e53;
  color: #c9ccd3;
`;

const WatermarkText = styled.div`
  display: grid;
  gap: 2px;
`;

const WatermarkName = styled.strong`
  font-family: "Liberation Sans", "Noto Sans CJK SC", sans-serif;
  font-size: 26px;
  font-weight: 700;
  line-height: 30px;
  white-space: nowrap;
`;

const WatermarkUrl = styled.span`
  font-family: "DejaVu Sans", sans-serif;
  font-size: 12px;
  line-height: 14px;
`;

const Mascot = styled.svg`
  position: absolute;
  right: 128px;
  bottom: 98px;
`;

function Tools({ items }) {
  return items.split(' ').map((name, i) => {
    if (name === '|') return <Divider key={i} />;
    if (name === 'v') {
      return (
        <CaretButton key={i} type="button" aria-label="more">
          <Caret />
        </CaretButton>
      );
    }
    const faded = name === 'undo' || name === 'redo';
    return (
      <ToolButton key={i} type="button" aria-label={name}>
        <Icon name={name} color={faded ? '#aaa' : undefined} />
      </ToolButton>
    );
  });
}

function Combo({ label, value, children, ...rest }) {
  return (
    <Field {...rest}>
      {children}
      <Select aria-label={label} defaultValue={value}>
        <option>{value}</option>
      </Select>
      <Caret />
    </Field>
  );
}

function SideTools({ items, edge }) {
  return (
    <SideStrip $edge={edge}>
      {items.split(' ').map((name) => (
        <SideButton key={name} type="button" aria-label={name}>
          <Icon name={name} />
        </SideButton>
      ))}
    </SideStrip>
  );
}

function WindowControls({ width, push, inset }) {
  return (
    <WindowButtons $width={width} $push={push} $inset={inset}>
      <WindowButton type="button" aria-label="最小化">
        <Svg width="10" height="10" $color="#fff"><path d="M1 6h7" strokeWidth="2" /></Svg>
      </WindowButton>
      <WindowButton type="button" aria-label="还原">
        <Svg width="10" height="10" $color="#fff"><path d="M2 4h4v4H2zM4 3V1h5v5H7" strokeWidth="1.300" /></Svg>
      </WindowButton>
      <WindowButton type="button" aria-label="关闭">
        <Svg width="10" height="10" $color="#fff"><path d="M2 2l5 6M7 2L2 8" strokeWidth="2" /></Svg>
      </WindowButton>
    </WindowButtons>
  );
}

const MENUS = [
  '文件(F)', '编辑(E)', '视图(V)', '插入(I)', '格式(O)', '工具(T)',
  '绘图(D)', '标注(N)', '修改(M)', '参数(P)', '窗口(W)', '帮助(H)',
];

const DRAW = 'line xline pline polygon rect arc circle cloud spline ellipse ellArc insert makeBlock point hatch gradient region table mtext';
const MODIFY = 'erase copy mirror offset array move rotate scale stretch trim extend breakAt break join chamfer fillet explode';
const MODES = ['snap', 'grid', 'ortho', 'polar', 'osnap', 'otrack', 'ducs', 'dyn', 'lwt', 'qp'];
const MODES_ON = ['ortho', 'osnap', 'dyn'];

function HeaderArea() {
  return (
    <Header>
      <AppButton type="button" aria-label="AutoCAD">
        <svg width="20" height="26" viewBox="0 0 20 26" aria-hidden="true">
          <path d="M2 22L8 4l5-1 6 19-5 1-1-5-5 1-1 5z" fill="#d21f26" stroke="#8c1115" />
          <path d="M9 14l1-6 2 6z" fill="#fff" />
          <path d="M2 22l6-4 6 1-7 5z" fill="#a3151a" />
        </svg>
        <Caret $color="#222" />
      </AppButton>
      <TitleBar>
        <QuickAccess>
          {['new', 'open', 'save', 'undo'].map((name) => (
            <ToolButton key={name} type="button" aria-label={name}>
              <Icon name={name} size={15} color="#f4f4f4" />
            </ToolButton>
          ))}
          <Caret $color="#333" />
          <ToolButton type="button" aria-label="redo"><Icon name="redo" size={15} color="#f4f4f4" /></ToolButton>
          <Caret $color="#333" />
          <ToolButton type="button" aria-label="print"><Icon name="print" size={15} color="#f4f4f4" /></ToolButton>
          <Caret $color="#111" />
        </QuickAccess>
        <Title>
          <span>AutoCAD 2010</span>
          <span>Drawing1.dwg</span>
        </Title>
        <InfoCenter>
          <SearchToggle type="button" aria-label="展开" />
          <SearchBox aria-label="搜索" placeholder="键入关键字或短语" />
          {['find', 'key', 'dish', 'star', 'info'].map((name) => (
            <ToolButton key={name} type="button" aria-label={name}>
              <Icon name={name} size={15} color="#f4f4f4" />
            </ToolButton>
          ))}
          <Caret $color="#333" />
        </InfoCenter>
        <WindowControls width={88} inset={10} />
      </TitleBar>
      <MenuBar>
        {MENUS.map((menu) => <MenuButton key={menu} type="button">{menu}</MenuButton>)}
        <WindowControls width={39} push="auto" />
      </MenuBar>
    </Header>
  );
}

function ToolbarArea() {
  return (
    <Toolbars>
      <ToolbarRow>
        <Grip $width={6} />
        <Strip $width={343}>
          <Tools items="new open save | print preview publish dwf | match block | undo v redo v | props dcenter palettes sheets markup calc | help" />
        </Strip>
        <Grip />
        <Strip $width={432}>
          <Tools items="textStyle" />
          <Combo label="文字样式" value="Standard" $width={87} $indent={13} />
          <Divider />
          <Tools items="dimStyle" />
          <Combo label="标注样式" value="ISO-25" $width={89} $indent={14} />
          <Divider />
          <Tools items="tableStyle" />
          <Combo label="表格样式" value="Standard" $width={88} $indent={3} />
          <Divider />
          <Tools items="leader" />
          <Combo label="引线样式" value="Standard" $width={87} $indent={13} />
        </Strip>
      </ToolbarRow>
      <ToolbarRow>
        <Grip $width={6} />
        <Strip $width={161}>
          <Combo label="工作空间" value="AutoCAD 经典" $width={127} $indent={5} />
          <Tools items="gear workspace" />
        </Strip>
        <Grip />
        <Strip $width={286}>
          <Tools items="layers" />
          <Combo label="图层" value="0" $width={218}>
            <Icon name="bulb" size={11} />
            <Icon name="sun" size={11} />
            <Icon name="freeze" size={9} />
            <Icon name="unlock" size={11} />
            <Swatch />
          </Combo>
          <Tools items="layerMake layerPrev layerState" />
        </Strip>
        <Grip />
        <Strip $width={419}>
          <Combo label="颜色" value="ByLayer" $width={110} $font="serif"><Swatch /></Combo>
          <Divider />
          <Combo label="线型" value="ByLayer" $width={117} $font="serif"><LineSample $length={43} /></Combo>
          <Divider />
          <Combo label="线宽" value="ByLayer" $width={92} $font="serif"><LineSample $length={25} /></Combo>
          <Divider />
          <Combo label="打印样式" value="BYCOLOR" $width={88} $indent={6} $font="mono" />
        </Strip>
      </ToolbarRow>
      <ToolbarRow>
        <Grip $width={6} />
        <Strip $width={241}>
          <Tools items="ucs | ucsWorld ucsPrev | ucsFace ucsObj ucsView | ucs ucsZ ucs3 | rotX rotY rotZ | ucsApply" />
        </Strip>
        <Grip />
        <Strip $width={201}>
          <Tools items="coincident perp parallel tangent horiz vert collinear concentric smooth symmetric equal fix" />
        </Strip>
        <Grip />
        <Strip $width={197}>
          <Tools items="autoCon autoAll conShow conShowAll conHideAll | dimAuto dimShow dimHide | conDel conSet fx" />
        </Strip>
        <Grip />
        <Strip $width={110}>
          <Tools items="wire2d | wire3d hidden3d realistic conceptual | styleMgr" />
        </Strip>
        <Grip />
        <Strip $width={101}>
          <Tools items="dimLin dimHor dimVer dimAng dimRad dimDia" />
        </Strip>
      </ToolbarRow>
      <ToolbarRow>
        <Grip $width={6} />
        <Strip $width={338}>
          <Tools items="views | vTop vBottom vLeft vRight vFront vBack | isoSW isoSE isoNE isoNW | camera | vPrev" />
          <Combo label="视图" value="" $width={101} />
        </Strip>
        <Grip />
        <Strip $width={383}>
          <Tools items="polysolid box wedge cone sphere cylinder torus pyramid helix planar | extrude presspull sweep revolve loft | union subtract intersect | move3d rotate3d align3d array3d" />
        </Strip>
      </ToolbarRow>
    </Toolbars>
  );
}

function DrawingArea() {
  return (
    <DrawingWindow>
      <Canvas>
        <Geometry width="520" height="230" aria-label="图形">
          <path d="M352 105.500h50M377.500 81v49" shapeRendering="crispEdges" />
          <path d="M375.500 105v52M372 157.500h70" shapeRendering="crispEdges" />
          <path d="M375.500 157.500l33 57L492 70" />
          <path d="M375 156v3" stroke="#d58b40" />
          <path d="M338.500 190.500l21-20-2-2 9-4.500-4 10-2-2-21 19.500z" fill="#f01818" stroke="#f01818" />
        </Geometry>
        <DynamicTip>正交: 283.1382 &lt; 90°</DynamicTip>
        <Note>起点</Note>
        <UcsMark width="70" height="71" aria-label="UCS">
          <path d="M9.500 58V22M12 60.500h36M6.500 57.500h6v6h-6zM9.500 20l-3 8h6zM50 60.500l-8-3v6z" />
          <path d="M7 5l3 4 3-4M10 9v5M57 56l6 9M63 56l-6 9" />
        </UcsMark>
      </Canvas>
      <VScroll>
        <Triangle type="button" $dir="up" aria-label="向上" />
        <Thumb $drop={98} />
        <Triangle type="button" $dir="down" aria-label="向下" />
      </VScroll>
      <TabRow>
        <TabNav>
          {['left', 'left', 'right', 'right'].map((dir, i) => (
            <TabNavButton key={i} type="button" aria-label={`标签 ${i + 1}`}>
              <Svg width="8" height="8" $color="none">
                <path d={dir === 'left' ? 'M6 1v6L2 4z' : 'M2 1v6l4-3z'} fill="#666" />
                {i === 0 && <path d="M1.500 1v6" stroke="#666" />}
                {i === 3 && <path d="M6.500 1v6" stroke="#666" />}
              </Svg>
            </TabNavButton>
          ))}
        </TabNav>
        <Tab type="button" $active>模型</Tab>
        <Tab type="button">布局1</Tab>
        <Tab type="button">布局2</Tab>
        <HScroll>
          <HStart>
            <Splitter />
            <Triangle type="button" $dir="left" aria-label="向左" />
          </HStart>
          <Triangle type="button" $dir="right" aria-label="向右" />
        </HScroll>
      </TabRow>
    </DrawingWindow>
  );
}

function App() {
  return (
    <Page>
      <GlobalStyle />
      <HeaderArea />
      <ToolbarArea />
      <Workspace>
        <SideColumn>
          <SideTools items={DRAW} />
        </SideColumn>
        <DrawingArea />
        <SideColumn>
          <SideTools items={MODIFY} edge={3} />
          <SideTools items="front back above under" edge={3} />
        </SideColumn>
      </Workspace>
      <CommandPanel>
        <CommandGrip />
        <History>
          <HistoryLine><Han>命令</Han>:</HistoryLine>
          <HistoryLine><Han>命令</Han>: _attdef</HistoryLine>
        </History>
        <VScroll>
          <Triangle type="button" $dir="up" aria-label="上一行" />
          <Triangle type="button" $dir="down" aria-label="下一行" />
        </VScroll>
        <Prompt>
          <span><Han>高度</Han>:  <Han>指定第二点</Han>:  &lt;<Han>正交</Han> <Han>开</Han>&gt;</span>
          <CommandInput aria-label="命令行" />
          <PromptScroll>
            <Thumb />
            <Triangle as="span" $dir="right" />
          </PromptScroll>
        </Prompt>
      </CommandPanel>
      <StatusBar>
        <Coordinates>2044.6049, 1556.5907, 0.0000</Coordinates>
        <StatusGroup $width={162}>
          {MODES.map((name) => (
            <StatusButton key={name} type="button" aria-label={name} $on={MODES_ON.includes(name)}>
              <Icon name={name} size={14} />
            </StatusButton>
          ))}
        </StatusGroup>
        <StatusGroup $width={54} $push="auto" $after={13}>
          <StatusButton type="button" $grow={2}>模型</StatusButton>
          <StatusButton type="button" aria-label="布局"><Icon name="layoutA" size={14} /></StatusButton>
          <StatusButton type="button" aria-label="快速查看"><Icon name="layoutB" size={14} /></StatusButton>
        </StatusGroup>
        <StatusGroup $width={64} $after={15}>
          {['pan', 'zoomLens', 'wheel', 'motion'].map((name) => (
            <StatusButton key={name} type="button" aria-label={name}><Icon name={name} size={14} /></StatusButton>
          ))}
        </StatusGroup>
        <StatusGroup $width={56} $after={142}>
          <StatusButton type="button" $grow={3}>
            <Icon name="annot" size={12} />1:1<Caret $color="#111" />
          </StatusButton>
          <StatusButton type="button" aria-label="注释可见性"><Icon name="annotVis" size={14} /></StatusButton>
        </StatusGroup>
      </StatusBar>
      <ImeBar>
        <svg width="22" height="18" viewBox="0 0 22 18" aria-hidden="true">
          <path d="M18 3C10-1 3 3 6 7s12 2 9 6-10 2-13 0" fill="none" stroke="#ee6b3d" strokeWidth="3" />
        </svg>
        中
        <svg width="80" height="16" viewBox="0 0 80 16" aria-hidden="true">
          <path d="M9 2c3 7-1 11-8 9 7 4 14-3 8-9z" fill="#2f7fd8" />
          <path d="M17 4h2v2h-2zM21 9h2l-2 4" fill="#2f7fd8" />
          <path d="M28 5h12v8H28zM30 7h8M30 9h8M32 11h5" fill="none" stroke="#2f7fd8" strokeWidth="1.400" />
          <circle cx="50" cy="4" r="3" fill="#8b8b8b" />
          <path d="M46 13V9q4-3 8 0v4z" fill="#8b8b8b" />
          <path d="M61 13l6-6" stroke="#2f7fd8" strokeWidth="3" />
          <path d="M70 4l-2 2-2-2 2-2c-4-1-6 2-4 5s7 1 6-3z" fill="#2f7fd8" />
        </svg>
      </ImeBar>
      <Mascot width="30" height="8" viewBox="0 0 30 8" aria-hidden="true">
        <circle cx="6" cy="7" r="6" fill="#bdbdbd" />
        <circle cx="22" cy="8" r="6" fill="#bdbdbd" />
      </Mascot>
      <Watermark>
        <svg width="36" height="38" viewBox="0 0 36 38" fill="none" stroke="#c9ccd3" strokeWidth="3" aria-hidden="true">
          <path d="M2 10v20c0 6 5 7 9 5M7 27V8c0-5 4-7 8-4l16 11c3 3 3 5 0 8L15 34c-4 3-8 1-8-4" />
          <path d="M14 14v9l7-4z" fill="#c9ccd3" stroke="none" />
          <path d="M24 15v7" strokeWidth="2" />
        </svg>
        <WatermarkText>
          <WatermarkName>溜溜自学</WatermarkName>
          <WatermarkUrl>zixue.3D66.com</WatermarkUrl>
        </WatermarkText>
      </Watermark>
    </Page>
  );
}

export default App;
